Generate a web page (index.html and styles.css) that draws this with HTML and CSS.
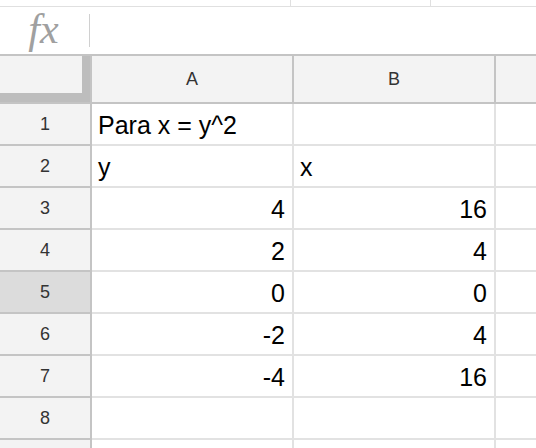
FILE: index.html
```html
<!DOCTYPE html>
<html lang="en">
<head>
    <meta charset="UTF-8">
    <meta name="viewport" content="width=device-width, initial-scale=1.0">
    <title>Para x = y^2</title>
    <link rel="stylesheet" href="styles.css">
</head>
<body>
    <div class="toolbar-edge">
        <div class="tb-seg first"></div>
        <div class="tb-seg second"></div>
    </div>

    <div class="formula-bar">
        <div class="fx-box"><span class="fx">fx</span></div>
        <div class="formula-input"></div>
    </div>

    <div class="sheet">
        <!-- column headers -->
        <div class="cell corner"></div>
        <div class="cell col-head">A</div>
        <div class="cell col-head">B</div>
        <div class="cell col-head last"></div>

        <div class="cell row-head">1</div>
        <div class="cell text">Para x = y^2</div>
        <div class="cell"></div>
        <div class="cell last"></div>

        <div class="cell row-head">2</div>
        <div class="cell text">y</div>
        <div class="cell text">x</div>
        <div class="cell last"></div>

        <div class="cell row-head">3</div>
        <div class="cell num">4</div>
        <div class="cell num">16</div>
        <div class="cell last"></div>

        <div class="cell row-head">4</div>
        <div class="cell num">2</div>
        <div class="cell num">4</div>
        <div class="cell last"></div>

        <div class="cell row-head active">5</div>
        <div class="cell num">0</div>
        <div class="cell num">0</div>
        <div class="cell last"></div>

        <div class="cell row-head">6</div>
        <div class="cell num">-2</div>
        <div class="cell num">4</div>
        <div class="cell last"></div>

        <div class="cell row-head">7</div>
        <div class="cell num">-4</div>
        <div class="cell num">16</div>
        <div class="cell last"></div>

        <div class="cell row-head">8</div>
        <div class="cell"></div>
        <div class="cell"></div>
        <div class="cell last"></div>

        <!-- next row, only its top edge shows -->
        <div class="cell row-head"></div>
        <div class="cell"></div>
        <div class="cell"></div>
        <div class="cell last"></div>
    </div>
</body>
</html>
```

FILE: styles.css
```css
* {
    box-sizing: border-box;
}

body {
    margin: 0;
    width: 536px;
    height: 448px;
    overflow: hidden;
    background: #fff;
    font-family: "Liberation Sans", Arial, sans-serif;
}

/* bottom edge of the toolbar, scrolled mostly out of view */
.toolbar-edge {
    display: flex;
    height: 7px;
    border-bottom: 1px solid #e0e0e0;
}

.tb-seg {
    height: 100%;
    border-right: 1px solid #e0e0e0;
}

.tb-seg.first { width: 291px; }
.tb-seg.second { width: 140px; }

.formula-bar {
    display: flex;
    align-items: center;
    height: 49px;
    border-bottom: 2px solid #c4c4c4;
}

.fx-box {
    width: 90px;
    height: 33px;
    display: flex;
    align-items: center;
    justify-content: center;
    border-right: 1px solid #d0d0d0;
}

.fx {
    font-family: "Liberation Serif", "Times New Roman", serif;
    font-style: italic;
    font-size: 42px;
    color: #a0a0a0;
    line-height: 1;
    margin-top: -3px;
    margin-right: 2px;
}

.formula-input {
    flex: 1;
}

.sheet {
    display: grid;
    grid-template-columns: 92px 202px 202px 1fr;
    grid-template-rows: 48px repeat(9, 42px);
}

.cell {
    border-right: 2px solid #e2e2e2;
    border-bottom: 2px solid #e2e2e2;
    display: flex;
    align-items: center;
    font-size: 25px;
    color: #000;
    padding: 3px 7px 0 6px;
    white-space: nowrap;
}

.cell.last {
    border-right: none;
}

.col-head,
.row-head,
.corner {
    background: #f3f3f3;
    border-color: #c4c4c4;
    color: #333;
    font-size: 18px;
    justify-content: center;
    padding: 0;
}

.col-head {
    padding-top: 1px;
}

.row-head.active {
    background: #dcdcdc;
}

/* frozen-pane drag handles */
.corner {
    box-shadow: inset -8px -9px 0 #bdbdbd;
}

.num {
    justify-content: flex-end;
}
```
